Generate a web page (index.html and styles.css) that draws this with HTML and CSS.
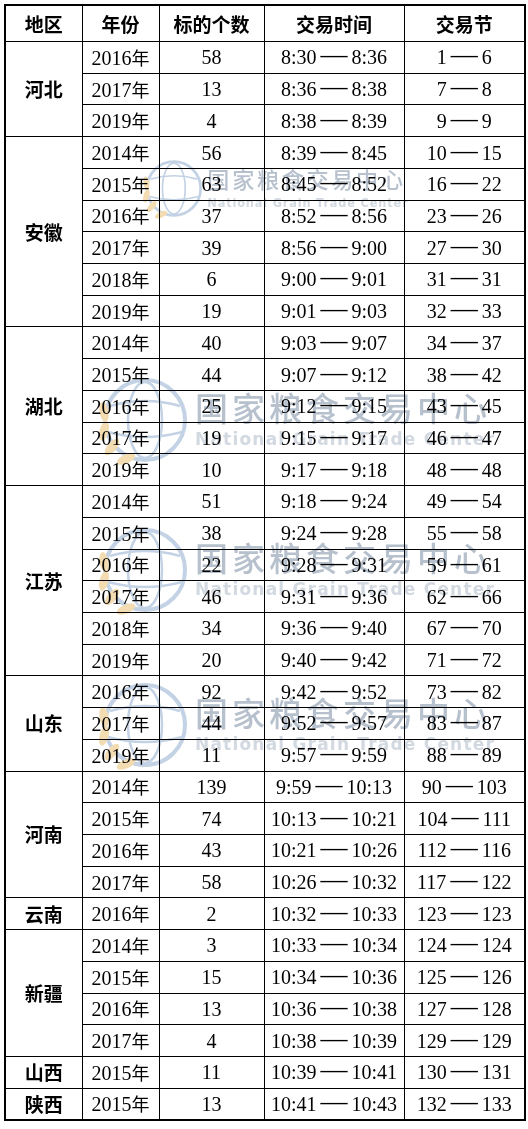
FILE: index.html
```html
<!DOCTYPE html>
<html lang="zh-CN">
<head>
<meta charset="utf-8">
<title>交易安排</title>
<link rel="stylesheet" href="styles.css">
</head>
<body>
<div class="sheet">
<table class="grid">
<colgroup><col class="c1"><col class="c2"><col class="c3"><col class="c4"><col class="c5"></colgroup>
<thead>
<tr class="head"><th>地区</th><th>年份</th><th>标的个数</th><th>交易时间</th><th>交易节</th></tr>
</thead>
<tbody>
<tr><td class="rg" rowspan="3">河北</td><td>2016<span class="cj">年</span></td><td>58</td><td>8:30<span class="d">—</span>8:36</td><td>1<span class="d">—</span>6</td></tr>
<tr><td>2017<span class="cj">年</span></td><td>13</td><td>8:36<span class="d">—</span>8:38</td><td>7<span class="d">—</span>8</td></tr>
<tr><td>2019<span class="cj">年</span></td><td>4</td><td>8:38<span class="d">—</span>8:39</td><td>9<span class="d">—</span>9</td></tr>

<tr><td class="rg" rowspan="6">安徽</td><td>2014<span class="cj">年</span></td><td>56</td><td>8:39<span class="d">—</span>8:45</td><td>10<span class="d">—</span>15</td></tr>
<tr><td>2015<span class="cj">年</span></td><td>63</td><td>8:45<span class="d">—</span>8:52</td><td>16<span class="d">—</span>22</td></tr>
<tr><td>2016<span class="cj">年</span></td><td>37</td><td>8:52<span class="d">—</span>8:56</td><td>23<span class="d">—</span>26</td></tr>
<tr><td>2017<span class="cj">年</span></td><td>39</td><td>8:56<span class="d">—</span>9:00</td><td>27<span class="d">—</span>30</td></tr>
<tr><td>2018<span class="cj">年</span></td><td>6</td><td>9:00<span class="d">—</span>9:01</td><td>31<span class="d">—</span>31</td></tr>
<tr><td>2019<span class="cj">年</span></td><td>19</td><td>9:01<span class="d">—</span>9:03</td><td>32<span class="d">—</span>33</td></tr>

<tr><td class="rg" rowspan="5">湖北</td><td>2014<span class="cj">年</span></td><td>40</td><td>9:03<span class="d">—</span>9:07</td><td>34<span class="d">—</span>37</td></tr>
<tr><td>2015<span class="cj">年</span></td><td>44</td><td>9:07<span class="d">—</span>9:12</td><td>38<span class="d">—</span>42</td></tr>
<tr><td>2016<span class="cj">年</span></td><td>25</td><td>9:12<span class="d">—</span>9:15</td><td>43<span class="d">—</span>45</td></tr>
<tr><td>2017<span class="cj">年</span></td><td>19</td><td>9:15<span class="d">—</span>9:17</td><td>46<span class="d">—</span>47</td></tr>
<tr><td>2019<span class="cj">年</span></td><td>10</td><td>9:17<span class="d">—</span>9:18</td><td>48<span class="d">—</span>48</td></tr>

<tr><td class="rg" rowspan="6">江苏</td><td>2014<span class="cj">年</span></td><td>51</td><td>9:18<span class="d">—</span>9:24</td><td>49<span class="d">—</span>54</td></tr>
<tr><td>2015<span class="cj">年</span></td><td>38</td><td>9:24<span class="d">—</span>9:28</td><td>55<span class="d">—</span>58</td></tr>
<tr><td>2016<span class="cj">年</span></td><td>22</td><td>9:28<span class="d">—</span>9:31</td><td>59<span class="d">—</span>61</td></tr>
<tr><td>2017<span class="cj">年</span></td><td>46</td><td>9:31<span class="d">—</span>9:36</td><td>62<span class="d">—</span>66</td></tr>
<tr><td>2018<span class="cj">年</span></td><td>34</td><td>9:36<span class="d">—</span>9:40</td><td>67<span class="d">—</span>70</td></tr>
<tr><td>2019<span class="cj">年</span></td><td>20</td><td>9:40<span class="d">—</span>9:42</td><td>71<span class="d">—</span>72</td></tr>

<tr><td class="rg" rowspan="3">山东</td><td>2016<span class="cj">年</span></td><td>92</td><td>9:42<span class="d">—</span>9:52</td><td>73<span class="d">—</span>82</td></tr>
<tr><td>2017<span class="cj">年</span></td><td>44</td><td>9:52<span class="d">—</span>9:57</td><td>83<span class="d">—</span>87</td></tr>
<tr><td>2019<span class="cj">年</span></td><td>11</td><td>9:57<span class="d">—</span>9:59</td><td>88<span class="d">—</span>89</td></tr>

<tr><td class="rg" rowspan="4">河南</td><td>2014<span class="cj">年</span></td><td>139</td><td>9:59<span class="d">—</span>10:13</td><td>90<span class="d">—</span>103</td></tr>
<tr><td>2015<span class="cj">年</span></td><td>74</td><td>10:13<span class="d">—</span>10:21</td><td>104<span class="d">—</span>111</td></tr>
<tr><td>2016<span class="cj">年</span></td><td>43</td><td>10:21<span class="d">—</span>10:26</td><td>112<span class="d">—</span>116</td></tr>
<tr><td>2017<span class="cj">年</span></td><td>58</td><td>10:26<span class="d">—</span>10:32</td><td>117<span class="d">—</span>122</td></tr>

<tr><td class="rg">云南</td><td>2016<span class="cj">年</span></td><td>2</td><td>10:32<span class="d">—</span>10:33</td><td>123<span class="d">—</span>123</td></tr>

<tr><td class="rg" rowspan="4">新疆</td><td>2014<span class="cj">年</span></td><td>3</td><td>10:33<span class="d">—</span>10:34</td><td>124<span class="d">—</span>124</td></tr>
<tr><td>2015<span class="cj">年</span></td><td>15</td><td>10:34<span class="d">—</span>10:36</td><td>125<span class="d">—</span>126</td></tr>
<tr><td>2016<span class="cj">年</span></td><td>13</td><td>10:36<span class="d">—</span>10:38</td><td>127<span class="d">—</span>128</td></tr>
<tr><td>2017<span class="cj">年</span></td><td>4</td><td>10:38<span class="d">—</span>10:39</td><td>129<span class="d">—</span>129</td></tr>

<tr><td class="rg">山西</td><td>2015<span class="cj">年</span></td><td>11</td><td>10:39<span class="d">—</span>10:41</td><td>130<span class="d">—</span>131</td></tr>
<tr><td class="rg">陕西</td><td>2015<span class="cj">年</span></td><td>13</td><td>10:41<span class="d">—</span>10:43</td><td>132<span class="d">—</span>133</td></tr>
</tbody>
</table>

<div class="wm wm-small">
  <svg class="logo" viewBox="0 0 100 100" aria-hidden="true">
    <g fill="none" stroke="#c3d2e4" stroke-width="4">
      <circle cx="55" cy="50" r="40"/>
      <ellipse cx="55" cy="50" rx="17" ry="38" stroke-width="2.5"/>
      <path d="M20 36 Q55 26 90 36" stroke-width="2.5"/>
      <path d="M18 62 Q55 72 92 62" stroke-width="2.5"/>
    </g>
    <g fill="#f4dcb2">
      <ellipse cx="14" cy="42" rx="4.5" ry="10" transform="rotate(-10 14 42)"/>
      <ellipse cx="14" cy="61" rx="4.5" ry="10" transform="rotate(15 14 61)"/>
      <ellipse cx="22" cy="77" rx="4.5" ry="10" transform="rotate(40 22 77)"/>
      <ellipse cx="36" cy="89" rx="4.5" ry="10" transform="rotate(65 36 89)"/>
    </g>
  </svg>
  <div class="wm-text">
    <div class="wm-cn">国家粮食交易中心</div>
    <div class="wm-en">National Grain Trade Center</div>
  </div>
</div>

<div class="wm wm-a">
  <svg class="logo" viewBox="0 0 100 100" aria-hidden="true">
    <g fill="none" stroke="#c3d2e4" stroke-width="4">
      <circle cx="55" cy="50" r="40"/>
      <ellipse cx="55" cy="50" rx="17" ry="38" stroke-width="2.5"/>
      <path d="M20 36 Q55 26 90 36" stroke-width="2.5"/>
      <path d="M18 62 Q55 72 92 62" stroke-width="2.5"/>
    </g>
    <g fill="#f4dcb2">
      <ellipse cx="14" cy="42" rx="4.5" ry="10" transform="rotate(-10 14 42)"/>
      <ellipse cx="14" cy="61" rx="4.5" ry="10" transform="rotate(15 14 61)"/>
      <ellipse cx="22" cy="77" rx="4.5" ry="10" transform="rotate(40 22 77)"/>
      <ellipse cx="36" cy="89" rx="4.5" ry="10" transform="rotate(65 36 89)"/>
    </g>
  </svg>
  <div class="wm-text">
    <div class="wm-cn">国家粮食交易中心</div>
    <div class="wm-en">National Grain Trade Center</div>
  </div>
</div>

<div class="wm wm-b">
  <svg class="logo" viewBox="0 0 100 100" aria-hidden="true">
    <g fill="none" stroke="#c3d2e4" stroke-width="4">
      <circle cx="55" cy="50" r="40"/>
      <ellipse cx="55" cy="50" rx="17" ry="38" stroke-width="2.5"/>
      <path d="M20 36 Q55 26 90 36" stroke-width="2.5"/>
      <path d="M18 62 Q55 72 92 62" stroke-width="2.5"/>
    </g>
    <g fill="#f4dcb2">
      <ellipse cx="14" cy="42" rx="4.5" ry="10" transform="rotate(-10 14 42)"/>
      <ellipse cx="14" cy="61" rx="4.5" ry="10" transform="rotate(15 14 61)"/>
      <ellipse cx="22" cy="77" rx="4.5" ry="10" transform="rotate(40 22 77)"/>
      <ellipse cx="36" cy="89" rx="4.5" ry="10" transform="rotate(65 36 89)"/>
    </g>
  </svg>
  <div class="wm-text">
    <div class="wm-cn">国家粮食交易中心</div>
    <div class="wm-en">National Grain Trade Center</div>
  </div>
</div>

<div class="wm wm-c">
  <svg class="logo" viewBox="0 0 100 100" aria-hidden="true">
    <g fill="none" stroke="#c3d2e4" stroke-width="4">
      <circle cx="55" cy="50" r="40"/>
      <ellipse cx="55" cy="50" rx="17" ry="38" stroke-width="2.5"/>
      <path d="M20 36 Q55 26 90 36" stroke-width="2.5"/>
      <path d="M18 62 Q55 72 92 62" stroke-width="2.5"/>
    </g>
    <g fill="#f4dcb2">
      <ellipse cx="14" cy="42" rx="4.5" ry="10" transform="rotate(-10 14 42)"/>
      <ellipse cx="14" cy="61" rx="4.5" ry="10" transform="rotate(15 14 61)"/>
      <ellipse cx="22" cy="77" rx="4.5" ry="10" transform="rotate(40 22 77)"/>
      <ellipse cx="36" cy="89" rx="4.5" ry="10" transform="rotate(65 36 89)"/>
    </g>
  </svg>
  <div class="wm-text">
    <div class="wm-cn">国家粮食交易中心</div>
    <div class="wm-en">National Grain Trade Center</div>
  </div>
</div>
</div>
</body>
</html>
```

FILE: styles.css
```css
html, body {
  margin: 0;
  padding: 0;
  background: #ffffff;
}

.sheet {
  position: relative;
  padding: 4px;
  width: 520px;
}

.grid {
  border-collapse: collapse;
  table-layout: fixed;
  width: 520px;
  border: 2px solid #000;
  font-family: "Liberation Serif", "Noto Sans CJK SC", serif;
  font-size: 20px;
  color: #000;
}

.c1 { width: 77px; }
.c2 { width: 77px; }
.c3 { width: 105px; }
.c4 { width: 140px; }
.c5 { width: 121px; }

.grid th,
.grid td {
  border: 1px solid #000;
  padding: 0;
  text-align: center;
  vertical-align: middle;
  line-height: 22px;
  white-space: nowrap;
}

.head th {
  height: 35px;
  font-family: "Noto Sans CJK SC", sans-serif;
  font-weight: 700;
  font-size: 19px;
}

.grid tbody tr {
  height: 31.72px;
}

.grid td.rg {
  font-family: "Noto Sans CJK SC", sans-serif;
  font-weight: 700;
  font-size: 19px;
}

.cj {
  font-family: "Noto Sans CJK SC", sans-serif;
  font-size: 18px;
}

.d {
  display: inline-block;
  font-size: 27px;
  line-height: 10px;
  margin: 0 4px;
  vertical-align: 1px;
}

/* watermarks */
.wm {
  position: absolute;
  display: flex;
  align-items: center;
  width: max-content;
  white-space: nowrap;
  pointer-events: none;
  mix-blend-mode: multiply;
  transform-origin: 0 0;
}

.wm .logo {
  width: 100px;
  height: 100px;
  flex: none;
  margin-right: 5px;
}

.wm-text {
  display: flex;
  flex-direction: column;
  align-items: flex-start;
}

.wm-cn {
  font-family: "Noto Sans CJK SC", sans-serif;
  font-weight: 500;
  font-size: 33px;
  line-height: 34px;
  letter-spacing: 4px;
  color: #b7c1cd;
}

.wm-en {
  font-family: "DejaVu Sans", sans-serif;
  font-weight: 700;
  font-size: 17px;
  line-height: 22px;
  letter-spacing: 1.2px;
  color: #d3d9e1;
  margin-top: 4px;
}

.wm-a { left: 90px; top: 370px; }
.wm-b { left: 90px; top: 520px; }
.wm-c { left: 90px; top: 675px; }
.wm-small { left: 137px; top: 155px; transform: scale(0.67); }
.wm-small .wm-en { margin-top: 8px; }
```
